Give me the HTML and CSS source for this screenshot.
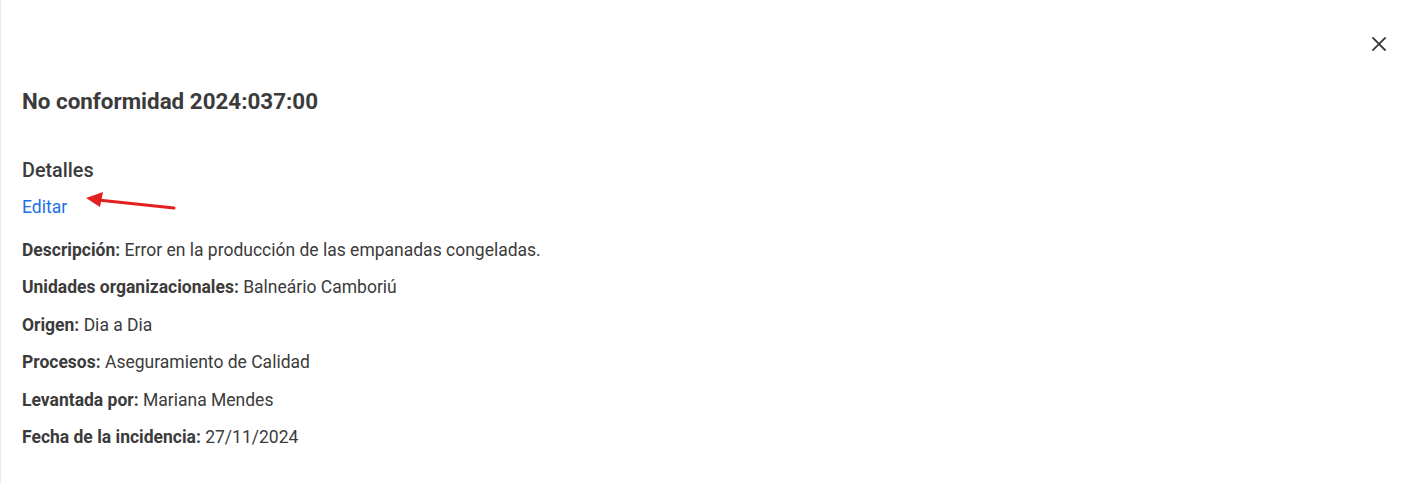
FILE: index.html
```html
<!DOCTYPE html>
<html lang="es">
<head>
    <meta charset="UTF-8">
    <meta name="viewport" content="width=device-width, initial-scale=1.0">
    <title>No conformidad 2024:037:00</title>
    <link rel="stylesheet" href="styles.css">
</head>
<body>
    <div id="drawer">
        <div id="drawer-top">
            <button class="close-button" aria-label="Cerrar">
                <svg width="14" height="14" viewBox="0 0 14 14">
                    <path d="M1 1 L13 13 M13 1 L1 13" stroke="#3c3c3c" stroke-width="1.8" stroke-linecap="square" fill="none"/>
                </svg>
            </button>
        </div>

        <h1 id="record-title">No conformidad 2024:037:00</h1>

        <div id="details">
            <h2>Detalles</h2>
            <div class="edit-row">
                <a href="#" class="edit-link">Editar</a>
                <!-- annotation arrow -->
                <svg class="pointer-arrow" width="100" height="24" viewBox="0 0 100 24">
                    <path d="M90 18 L14 10" stroke="#e3201f" stroke-width="3" stroke-linecap="round" fill="none"/>
                    <path d="M2 8 L19 2 L16 17 Z" fill="#e3201f"/>
                </svg>
            </div>

            <div class="field-list">
                <p><b>Descripción:</b> Error en la producción de las empanadas congeladas.</p>
                <p><b>Unidades organizacionales:</b> Balneário Camboriú</p>
                <p><b>Origen:</b> Dia a Dia</p>
                <p><b>Procesos:</b> Aseguramiento de Calidad</p>
                <p><b>Levantada por:</b> Mariana Mendes</p>
                <p><b>Fecha de la incidencia:</b> 27/11/2024</p>
            </div>
        </div>
    </div>
</body>
</html>
```

FILE: styles.css
```css
html, body {
    margin: 0;
    height: 100%;
    background-color: #ffffff;
}

body {
    font-family: Roboto, "Liberation Sans", sans-serif;
    color: #3b3b3b;
}

#drawer {
    height: 100%;
    box-sizing: border-box;
    border-left: 1px solid #ececec;
    padding: 0 21px;
}

#drawer-top {
    display: flex;
    justify-content: flex-end;
    padding-top: 37px;
}

.close-button {
    background: none;
    border: none;
    padding: 0;
    margin-right: 13px;
    width: 14px;
    height: 14px;
    cursor: pointer;
    display: flex;
}

#record-title {
    margin: 35px 0 0;
    font-size: 22.4px;
    font-weight: 700;
    line-height: 30px;
}

#details {
    margin-top: 42px;
}

#details h2 {
    margin: 0;
    font-size: 19.8px;
    font-weight: 500;
    line-height: 26px;
}

.edit-row {
    position: relative;
    margin-top: 10px;
    height: 26px;
}

.edit-link {
    color: #1a6fe8;
    text-decoration: none;
    font-size: 17.5px;
    line-height: 26px;
}

.pointer-arrow {
    position: absolute;
    left: 62px;
    top: -4px;
}

.field-list {
    margin-top: 18px;
}

.field-list p {
    margin: 0 0 13.4px;
    font-size: 17.5px;
    line-height: 24px;
}

.field-list b {
    font-weight: 700;
}
```
